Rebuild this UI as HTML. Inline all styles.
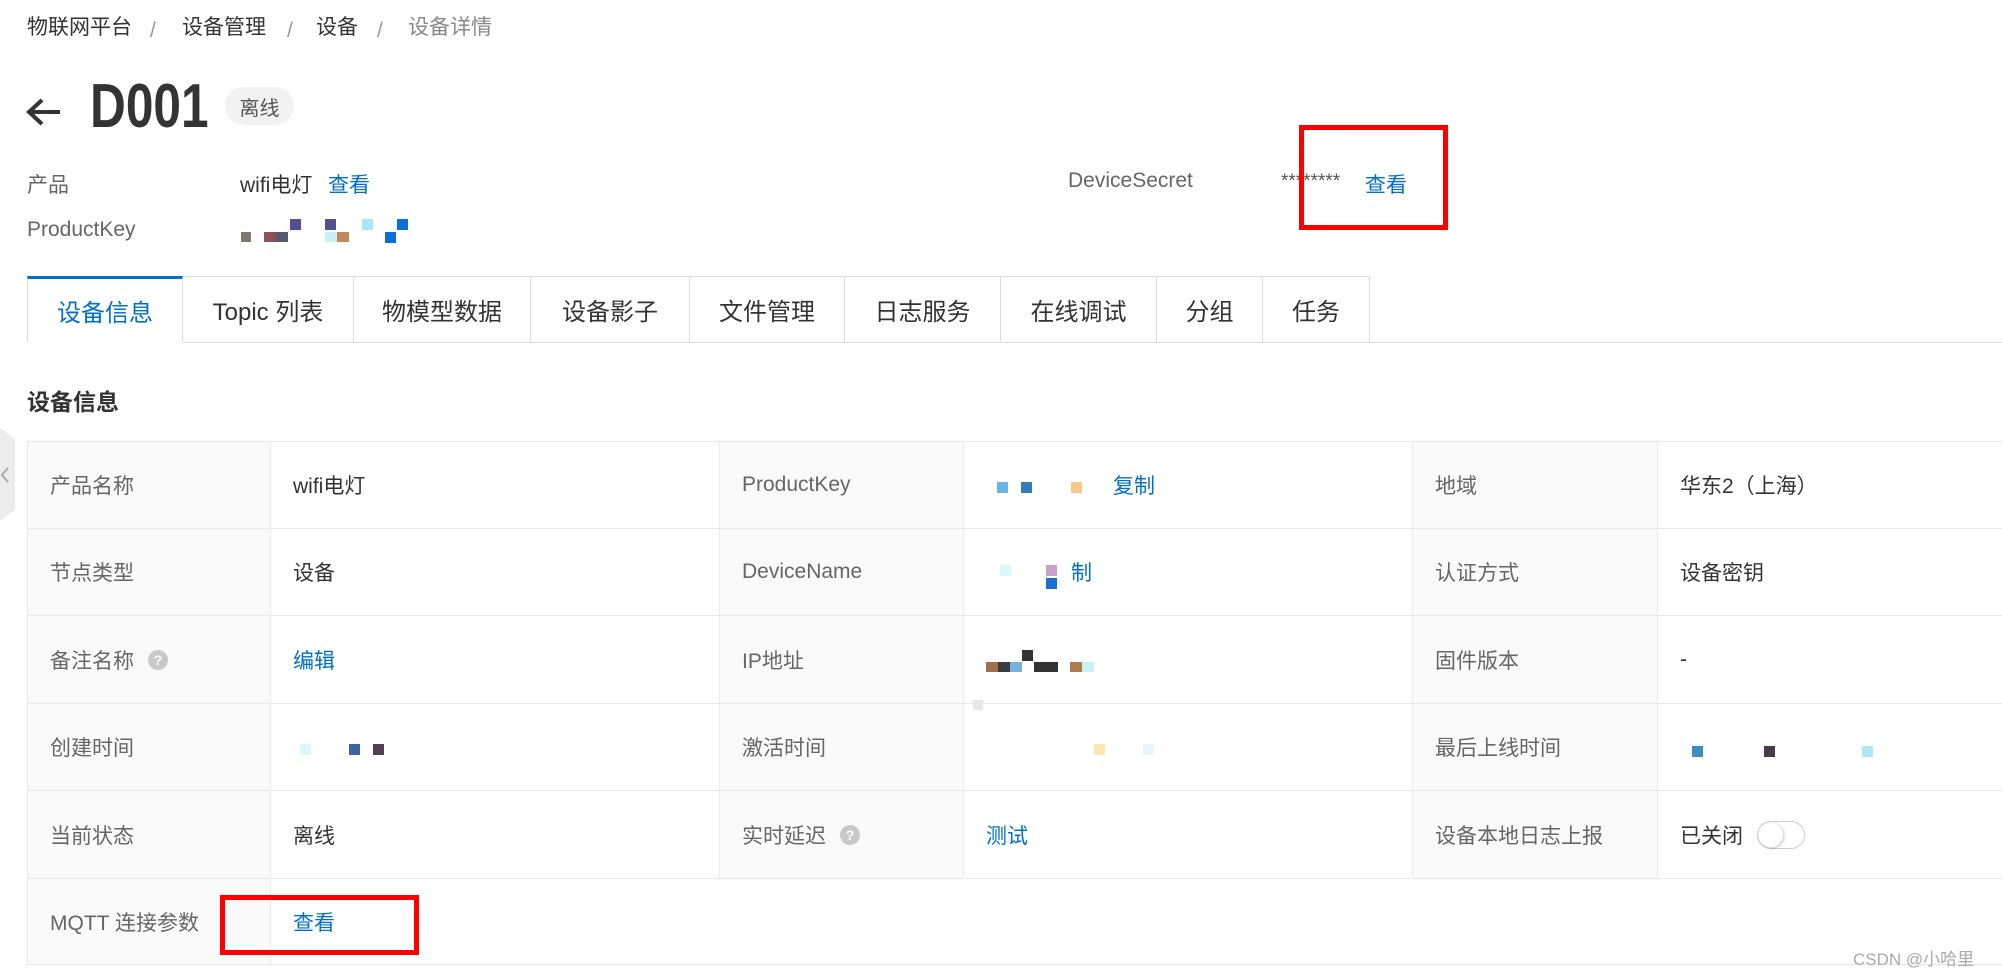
<!DOCTYPE html>
<html><head><meta charset="utf-8"><style>
*{margin:0;padding:0;box-sizing:border-box}
body{width:2002px;height:973px;overflow:hidden;background:#fff;position:relative;font-family:"Liberation Sans","Noto Sans CJK SC",sans-serif;color:#333}
.a{position:absolute;white-space:nowrap}
.bc{font-size:21px;top:14px;color:#333;line-height:28px;height:28px}
.lbl{color:#666;font-size:21px}
.lnk{color:#0070cc}
.tab{position:absolute;top:276px;height:67px;border:1px solid #ddd;border-left:none;font-size:24px;color:#333;display:flex;align-items:center;justify-content:center;background:#fff}
.cell{position:absolute;border-right:1px solid #ebebeb;border-bottom:1px solid #e8e8e8;display:flex;align-items:center;font-size:21px}
.l{background:#fafafa;color:#666;padding-left:22px}
.v{background:#fff;color:#333;padding-left:22px}
.q{display:inline-block;width:20px;height:20px;border-radius:50%;background:#c8c8c8;color:#fff;font-size:14px;font-weight:bold;text-align:center;line-height:20px;margin-left:14px}
.px{position:absolute}
</style></head><body>
<div class="a bc" style="left:27px">物联网平台</div>
<div class="a bc" style="left:150px;color:#999;top:17px">/</div>
<div class="a bc" style="left:182px">设备管理</div>
<div class="a bc" style="left:287px;color:#999;top:17px">/</div>
<div class="a bc" style="left:316px">设备</div>
<div class="a bc" style="left:377px;color:#999;top:17px">/</div>
<div class="a bc" style="left:408px;color:#888">设备详情</div>

<svg class="a" style="left:26px;top:96px" width="36" height="32" viewBox="0 0 36 32"><path d="M34 16H4M16 4L3 16l13 12" fill="none" stroke="#333" stroke-width="4"/></svg>
<div class="a" style="left:90px;top:76px;font-size:62px;font-weight:bold;color:#333;transform:scaleX(0.8);transform-origin:left;line-height:62px">D001</div>
<div class="a" style="left:225px;top:87px;width:69px;height:38px;border-radius:19px;background:#f2f2f2;color:#555;font-size:20px;display:flex;align-items:center;justify-content:center">离线</div>

<div class="a lbl" style="left:27px;top:169px">产品</div>
<div class="a" style="left:240px;top:169px;font-size:21px;color:#333">wifi电灯</div>
<div class="a lnk" style="left:328px;top:169px;font-size:21px">查看</div>
<div class="a lbl" style="left:1068px;top:169px">DeviceSecret</div>
<div class="a" style="left:1281px;top:171px;font-size:19px;color:#555">********</div>
<div class="a lnk" style="left:1365px;top:169px;font-size:21px">查看</div>
<div class="a" style="left:1299px;top:125px;width:149px;height:105px;border:5px solid #f00"></div>
<div class="a lbl" style="left:27px;top:218px">ProductKey</div>
<div class="px" style="left:241px;top:232px;width:10px;height:10px;background:#7a7a6e"></div>
<div class="px" style="left:264px;top:232px;width:12px;height:10px;background:#8e4f55"></div>
<div class="px" style="left:276px;top:232px;width:12px;height:10px;background:#555a70"></div>
<div class="px" style="left:290px;top:219px;width:11px;height:11px;background:#544f93"></div>
<div class="px" style="left:325px;top:219px;width:11px;height:11px;background:#544f93"></div>
<div class="px" style="left:325px;top:232px;width:12px;height:10px;background:#c9f0f6"></div>
<div class="px" style="left:337px;top:232px;width:12px;height:10px;background:#c08a5c"></div>
<div class="px" style="left:362px;top:219px;width:11px;height:11px;background:#a7e8f8"></div>
<div class="px" style="left:385px;top:232px;width:11px;height:11px;background:#0a6fd7"></div>
<div class="px" style="left:397px;top:219px;width:11px;height:11px;background:#0a6fd7"></div>

<div class="a" style="left:27px;top:342px;width:1975px;border-top:1px solid #ddd"></div>
<div class="tab" style="left:27px;width:156px;border-left:1px solid #ddd;border-top:3px solid #0070cc;border-bottom:1px solid #fff;color:#0070cc">设备信息</div>
<div class="tab" style="left:183px;width:171px">Topic 列表</div>
<div class="tab" style="left:354px;width:177px">物模型数据</div>
<div class="tab" style="left:531px;width:159px">设备影子</div>
<div class="tab" style="left:690px;width:155px">文件管理</div>
<div class="tab" style="left:845px;width:156px">日志服务</div>
<div class="tab" style="left:1001px;width:156px">在线调试</div>
<div class="tab" style="left:1157px;width:106px">分组</div>
<div class="tab" style="left:1263px;width:107px">任务</div>

<div class="a" style="left:27px;top:383px;font-size:23px;font-weight:bold;color:#333">设备信息</div>

<div class="px" style="left:0;top:428px;width:15px;height:93px;background:#ececec;clip-path:polygon(0 0,100% 12%,100% 88%,0 100%)"></div>
<svg class="a" style="left:0;top:466px" width="10" height="18"><path d="M8 2L2 9l6 7" fill="none" stroke="#aaa" stroke-width="2"/></svg>

<div class="a" style="left:27px;top:441px;width:1975px;border-top:1px solid #e8e8e8"></div>
<div class="a" style="left:27px;top:441px;height:524px;border-left:1px solid #e8e8e8"></div>

<div class="cell l" style="left:28px;top:442px;width:243px;height:87px">产品名称</div>
<div class="cell v" style="left:271px;top:442px;width:449px;height:87px">wifi电灯</div>
<div class="cell l" style="left:720px;top:442px;width:244px;height:87px">ProductKey</div>
<div class="cell v" style="left:964px;top:442px;width:449px;height:87px"><span style="display:inline-block;width:127px"></span><span class="lnk">复制</span></div>
<div class="cell l" style="left:1413px;top:442px;width:245px;height:87px">地域</div>
<div class="cell v" style="left:1658px;top:442px;width:344px;height:87px;border-right:none">华东2（上海）</div>

<div class="cell l" style="left:28px;top:529px;width:243px;height:87px">节点类型</div>
<div class="cell v" style="left:271px;top:529px;width:449px;height:87px">设备</div>
<div class="cell l" style="left:720px;top:529px;width:244px;height:87px">DeviceName</div>
<div class="cell v" style="left:964px;top:529px;width:449px;height:87px"><span style="display:inline-block;width:85px"></span><span class="lnk">制</span></div>
<div class="cell l" style="left:1413px;top:529px;width:245px;height:87px">认证方式</div>
<div class="cell v" style="left:1658px;top:529px;width:344px;height:87px;border-right:none">设备密钥</div>

<div class="cell l" style="left:28px;top:616px;width:243px;height:88px">备注名称<span class="q">?</span></div>
<div class="cell v" style="left:271px;top:616px;width:449px;height:88px"><span class="lnk">编辑</span></div>
<div class="cell l" style="left:720px;top:616px;width:244px;height:88px">IP地址</div>
<div class="cell v" style="left:964px;top:616px;width:449px;height:88px"></div>
<div class="cell l" style="left:1413px;top:616px;width:245px;height:88px">固件版本</div>
<div class="cell v" style="left:1658px;top:616px;width:344px;height:88px;border-right:none">-</div>

<div class="cell l" style="left:28px;top:704px;width:243px;height:87px">创建时间</div>
<div class="cell v" style="left:271px;top:704px;width:449px;height:87px"></div>
<div class="cell l" style="left:720px;top:704px;width:244px;height:87px">激活时间</div>
<div class="cell v" style="left:964px;top:704px;width:449px;height:87px"></div>
<div class="cell l" style="left:1413px;top:704px;width:245px;height:87px">最后上线时间</div>
<div class="cell v" style="left:1658px;top:704px;width:344px;height:87px;border-right:none"></div>

<div class="cell l" style="left:28px;top:791px;width:243px;height:88px">当前状态</div>
<div class="cell v" style="left:271px;top:791px;width:449px;height:88px">离线</div>
<div class="cell l" style="left:720px;top:791px;width:244px;height:88px">实时延迟<span class="q">?</span></div>
<div class="cell v" style="left:964px;top:791px;width:449px;height:88px"><span class="lnk">测试</span></div>
<div class="cell l" style="left:1413px;top:791px;width:245px;height:88px">设备本地日志上报</div>
<div class="cell v" style="left:1658px;top:791px;width:344px;height:88px;border-right:none">已关闭<span style="display:inline-block;width:48px;height:28px;border:1px solid #ccc;border-radius:14px;margin-left:14px;position:relative;background:#fff"><span style="position:absolute;left:1px;top:1px;width:24px;height:24px;border-radius:50%;background:#fff;box-shadow:1px 1px 3px rgba(0,0,0,.25)"></span></span></div>

<div class="cell l" style="left:28px;top:879px;width:243px;height:86px">MQTT 连接参数</div>
<div class="cell v" style="left:271px;top:879px;width:1731px;height:86px;border-right:none"><span class="lnk">查看</span></div>
<div class="a" style="left:220px;top:895px;width:199px;height:60px;border:5px solid #f00"></div>

<div class="px" style="left:997px;top:482px;width:11px;height:11px;background:#6cb4e4"></div>
<div class="px" style="left:1021px;top:482px;width:11px;height:11px;background:#357db8"></div>
<div class="px" style="left:1071px;top:482px;width:11px;height:11px;background:#f8c88a"></div>
<div class="px" style="left:1046px;top:565px;width:11px;height:11px;background:#c8a0cc"></div>
<div class="px" style="left:1046px;top:578px;width:11px;height:11px;background:#1a6fd0"></div>
<div class="px" style="left:1000px;top:565px;width:11px;height:11px;background:#d8f8fa"></div>
<div class="px" style="left:986px;top:662px;width:12px;height:10px;background:#a0704a"></div>
<div class="px" style="left:998px;top:662px;width:12px;height:10px;background:#3a3a44"></div>
<div class="px" style="left:1010px;top:662px;width:12px;height:10px;background:#7ab0e0"></div>
<div class="px" style="left:1022px;top:650px;width:11px;height:11px;background:#333"></div>
<div class="px" style="left:1034px;top:662px;width:12px;height:10px;background:#333"></div>
<div class="px" style="left:1046px;top:662px;width:12px;height:10px;background:#333"></div>
<div class="px" style="left:1070px;top:662px;width:12px;height:10px;background:#b07a4a"></div>
<div class="px" style="left:1082px;top:662px;width:12px;height:10px;background:#c8f0f0"></div>
<div class="px" style="left:973px;top:700px;width:10px;height:10px;background:#e8e8e8"></div>
<div class="px" style="left:300px;top:744px;width:11px;height:11px;background:#d8f8fa"></div>
<div class="px" style="left:349px;top:744px;width:11px;height:11px;background:#3d62a0"></div>
<div class="px" style="left:373px;top:744px;width:11px;height:11px;background:#533e55"></div>
<div class="px" style="left:1094px;top:744px;width:11px;height:11px;background:#fbe8b0"></div>
<div class="px" style="left:1143px;top:744px;width:11px;height:11px;background:#e8f8fa"></div>
<div class="px" style="left:1692px;top:746px;width:11px;height:11px;background:#3d8fc0"></div>
<div class="px" style="left:1764px;top:746px;width:11px;height:11px;background:#4b3a48"></div>
<div class="px" style="left:1862px;top:746px;width:11px;height:11px;background:#b0e8fa"></div>

<div class="a" style="left:1853px;top:945px;font-size:17px;color:#aaa">CSDN @小哈里</div>
</body></html>
